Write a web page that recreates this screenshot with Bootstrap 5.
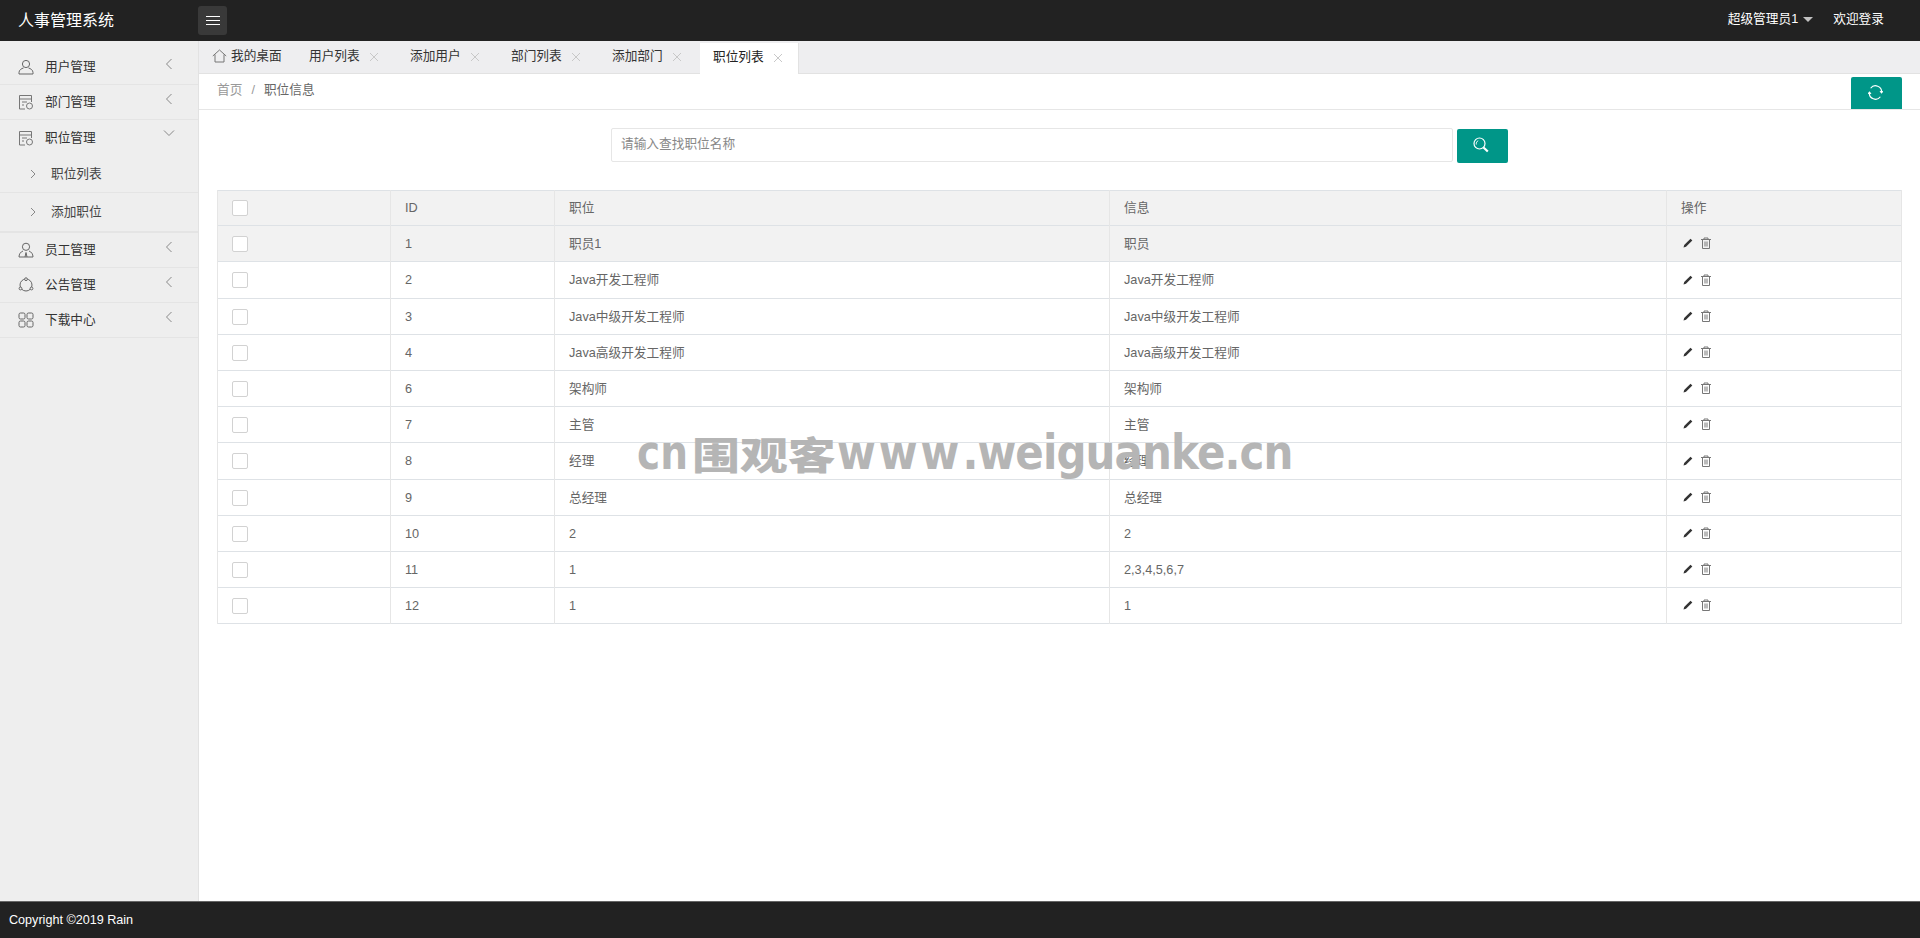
<!DOCTYPE html>
<html lang="zh-CN">
<head>
<meta charset="utf-8">
<title>人事管理系统</title>
<link href="https://cdn.jsdelivr.net/npm/bootstrap@5.3.0/dist/css/bootstrap.min.css" rel="stylesheet">
<style>
html,body{height:100%;overflow:hidden}
body{font-family:"Liberation Sans","Noto Sans CJK SC",sans-serif;font-size:12.7px;color:#666;background:#fff;line-height:20px}
.app-shell{height:938px;position:relative}
.top-bar{height:41px;background:#222;color:#fff;padding:0}
.brand-name{width:198px;padding-left:18px;font-size:16px;color:#fff}
.menu-toggle{width:29px;height:29px;background:#393939;border-radius:3px}
.top-link{color:#fff;font-size:12.7px;text-decoration:none}
.user-links{padding-bottom:3px}
.user-caret{width:0;height:0;border:5.500px solid transparent;border-top-color:#c2c2c2;border-bottom:0;margin-left:5px;margin-right:20px}
.side-panel{width:199px;background:#eee;border-right:1px solid #e2e2e2;padding-top:9px;flex:none}
.side-row{height:35px;border-bottom:1px solid #e4e4e4;padding-left:18px;color:#333;position:relative;padding-top:0}
.side-row svg.ico{width:16px;height:16px;margin-right:11px;flex:none}
.side-row .chev{position:absolute;left:165px;top:7px;width:8px;height:14px}
.side-row .chev-down{position:absolute;left:163px;top:9px;width:12px;height:8px}
.side-sub{height:38px;border-bottom:1px solid #e4e4e4;padding-left:30px;color:#444;padding-top:0}
.side-sub svg{width:6px;height:10px;margin-right:15px}
.side-sub-last{height:40px;border-bottom:2px solid #e4e4e4}
.tab-strip{height:33px;background:#eeeef0;border-bottom:1px solid #e2e2e2;padding-top:2px;flex:none}
.tab-cell{height:30px;width:101px;padding-left:13px;color:#333;flex:none;padding-bottom:4px}
.tab-home{width:97px;padding-left:13px}
.tab-on{background:#fff;height:31px;width:99px;color:#222;border-right:1px solid #e2e2e2}
.tab-x{width:10px;height:10px;margin-left:9px;margin-top:2px}
.crumb-bar{height:36px;border-bottom:1px solid #e6e6e6;padding-left:18px;padding-right:18px;flex:none}
.crumb-list{margin:0;padding-bottom:3px;--bs-breadcrumb-divider-color:#999;--bs-breadcrumb-item-padding-x:9px}
.crumb-list .breadcrumb-item{color:#999;line-height:20px}
.crumb-list .breadcrumb-item.active{color:#666}
.teal-btn{background:#009688;border:0;border-radius:2px;color:#fff;width:51px;padding:0;display:flex;align-items:center;justify-content:center}
.refresh-btn{height:32px;margin-top:3px;padding-right:3px;padding-bottom:2px;border-radius:2px 2px 0 0}
.find-row{width:897px;margin:18px auto 0;height:62px;gap:4px}
.find-input{height:34px;border:1px solid #e6e6e6;border-radius:2px;font-size:12.7px;padding:0 9px 2px;flex:1;color:#666}
.find-input::placeholder{color:#888}
.find-btn{height:34px;margin-top:1px;padding-right:3px;padding-bottom:2px}
.data-wrap{margin:0 18px}
.data-table{width:1684px;table-layout:fixed;margin:0;--bs-table-color:#666;--bs-table-bg:#fff;font-size:12.7px}
.data-table>thead>tr>th,.data-table>tbody>tr>td{padding:0 14px;vertical-align:middle;color:#666;font-weight:400;border-color:#e6e6e6;height:36px}
.data-table>thead>tr>th{height:35px;background:#f2f2f2}
.data-table>tbody>tr.row-on>td{background:#f2f2f2}
.data-table>tbody>tr.row-tall>td{height:37px}
.fake-check{display:block;width:16px;height:16px;background:#fff;border:1px solid #d2d2d2;border-radius:2px}
.act-set{padding-left:2px;padding-bottom:1px}
.act-pen{width:10px;height:10px;margin-right:7px}
.act-bin{width:12px;height:12px}
.foot-bar{height:37px;background:#222;border-top:1px solid #666;color:#fff;padding-left:9px;font-size:12.6px;flex:none}
.stamp-text{position:absolute;left:637px;top:434px;color:#b5b5b5;display:flex;align-items:flex-start;pointer-events:none;white-space:nowrap}
.stamp-cn,.stamp-url{display:block;font-family:"DejaVu Sans",sans-serif;font-weight:700;font-size:42px;line-height:42px;transform-origin:0 84.6%}
.stamp-cn{width:55px;transform:scale(.93,1.15)}
.stamp-url{width:460px;margin-left:2px;transform:scaleY(1.15);letter-spacing:-.9px}
.stamp-www{letter-spacing:3px}
.stamp-cjk{display:block;width:143px;font-family:"Noto Sans CJK SC",sans-serif;font-weight:900;font-size:38px;line-height:38px;transform-origin:0 50%;transform:scaleX(1.26)}
</style>
</head>
<body>
<div class="app-shell d-flex flex-column">
  <nav class="navbar top-bar flex-nowrap justify-content-start">
    <div class="brand-name">人事管理系统</div>
    <div class="menu-toggle d-flex align-items-center justify-content-center">
      <svg width="16" height="12" viewBox="0 0 16 12"><path d="M1 1.500h14M1 5.500h14M1 9.500h14" stroke="#fff" stroke-width="1"/></svg>
    </div>
    <div class="ms-auto d-flex align-items-center user-links">
      <a class="top-link" href="#">超级管理员1</a><span class="user-caret"></span>
      <a class="top-link" href="#" style="margin-right:36px">欢迎登录</a>
    </div>
  </nav>

  <div class="d-flex flex-grow-1" style="min-height:0">
    <aside class="side-panel">
      <div class="side-row d-flex align-items-center">
        <svg class="ico" viewBox="0 0 16 16" fill="none" stroke="#666"><circle cx="8" cy="5" r="3.600"/><path d="M1 15v-1.500c0-2.500 2.500-4 4.500-4.500M15 15v-1.500c0-2.500-2.500-4-4.500-4.500M1 15h14"/></svg>用户管理
        <svg class="chev" viewBox="0 0 8 14" fill="none" stroke="#888"><path d="M6.500 2 1.500 7l5 5"/></svg>
      </div>
      <div class="side-row d-flex align-items-center">
        <svg class="ico" viewBox="0 0 16 16" fill="none" stroke="#777"><path d="M7 15H1.500V1.500h12V8M1.500 5h12M4 8h5M4 11h2"/><circle cx="11.500" cy="12" r="3"/></svg>部门管理
        <svg class="chev" viewBox="0 0 8 14" fill="none" stroke="#888"><path d="M6.500 2 1.500 7l5 5"/></svg>
      </div>
      <div class="side-row d-flex align-items-center" style="border-bottom:0">
        <svg class="ico" viewBox="0 0 16 16" fill="none" stroke="#777"><path d="M7 15H1.500V1.500h12V8M1.500 5h12M4 8h5M4 11h2"/><circle cx="11.500" cy="12" r="3"/></svg>职位管理
        <svg class="chev-down" viewBox="0 0 12 8" fill="none" stroke="#888"><path d="M1 1.500l5 5 5-5"/></svg>
      </div>
      <div class="side-sub d-flex align-items-center">
        <svg viewBox="0 0 6 10" fill="none" stroke="#888"><path d="M1 1l4 4-4 4"/></svg>职位列表
      </div>
      <div class="side-sub side-sub-last d-flex align-items-center">
        <svg viewBox="0 0 6 10" fill="none" stroke="#888"><path d="M1 1l4 4-4 4"/></svg>添加职位
      </div>
      <div class="side-row d-flex align-items-center">
        <svg class="ico" viewBox="0 0 16 16" fill="none" stroke="#666"><circle cx="8" cy="4.800" r="3.600"/><path d="M5 9C2.500 10 1 12 1 15h14c0-3-1.500-5-4-6M8 10.500l-1 4.500M8 10.500l1 4.500"/></svg>员工管理
        <svg class="chev" viewBox="0 0 8 14" fill="none" stroke="#888"><path d="M6.500 2 1.500 7l5 5"/></svg>
      </div>
      <div class="side-row d-flex align-items-center">
        <svg class="ico" viewBox="0 0 16 16" fill="none" stroke="#666"><circle cx="8" cy="8" r="6"/><circle cx="8" cy="2.200" r="1.400" fill="#eee"/><circle cx="2.500" cy="11.500" r="1.400" fill="#eee"/><circle cx="13.500" cy="11.500" r="1.400" fill="#eee"/></svg>公告管理
        <svg class="chev" viewBox="0 0 8 14" fill="none" stroke="#888"><path d="M6.500 2 1.500 7l5 5"/></svg>
      </div>
      <div class="side-row d-flex align-items-center">
        <svg class="ico" viewBox="0 0 16 16" fill="none" stroke="#666"><rect x="1" y="1" width="6" height="6" rx="1.500"/><rect x="9" y="1" width="6" height="6" rx="1.500"/><rect x="1" y="9" width="6" height="6" rx="1.500"/><rect x="9" y="9" width="6" height="6" rx="1.500"/></svg>下载中心
        <svg class="chev" viewBox="0 0 8 14" fill="none" stroke="#888"><path d="M6.500 2 1.500 7l5 5"/></svg>
      </div>
    </aside>

    <main class="flex-grow-1 d-flex flex-column" style="min-width:0">
      <div class="tab-strip d-flex">
        <div class="tab-cell tab-home d-flex align-items-center">
          <svg width="15" height="14" viewBox="0 0 15 14" fill="none" stroke="#777" style="margin-right:4px"><path d="M.8 7 7.500 1l6.700 6M3 5.500V13h9V5.500"/></svg>我的桌面
        </div>
        <div class="tab-cell d-flex align-items-center">用户列表<svg class="tab-x" viewBox="0 0 10 10" stroke="#c8c8c8"><path d="M1 1l8 8M9 1l-8 8"/></svg></div>
        <div class="tab-cell d-flex align-items-center">添加用户<svg class="tab-x" viewBox="0 0 10 10" stroke="#c8c8c8"><path d="M1 1l8 8M9 1l-8 8"/></svg></div>
        <div class="tab-cell d-flex align-items-center">部门列表<svg class="tab-x" viewBox="0 0 10 10" stroke="#c8c8c8"><path d="M1 1l8 8M9 1l-8 8"/></svg></div>
        <div class="tab-cell d-flex align-items-center">添加部门<svg class="tab-x" viewBox="0 0 10 10" stroke="#c8c8c8"><path d="M1 1l8 8M9 1l-8 8"/></svg></div>
        <div class="tab-cell tab-on d-flex align-items-center">职位列表<svg class="tab-x" viewBox="0 0 10 10" stroke="#c8c8c8"><path d="M1 1l8 8M9 1l-8 8"/></svg></div>
      </div>

      <div class="crumb-bar d-flex justify-content-between">
        <ol class="breadcrumb crumb-list align-items-center">
          <li class="breadcrumb-item">首页</li>
          <li class="breadcrumb-item active">职位信息</li>
        </ol>
        <button class="teal-btn refresh-btn" type="button" aria-label="刷新">
          <svg width="15" height="15" viewBox="0 0 16 16" fill="none" stroke="#fff" stroke-width="1.200"><path d="M2.800 3.500A6.500 6.500 0 0 1 14.500 8M13.200 12.500A6.500 6.500 0 0 1 1.500 8"/><path d="M12.800 6.500 14.500 8.300 15.800 6.500M3.200 9.500 1.500 7.700.2 9.500"/></svg>
        </button>
      </div>

      <div class="find-row d-flex align-items-start">
        <input class="form-control find-input" type="text" placeholder="请输入查找职位名称">
        <button class="teal-btn find-btn" type="button" aria-label="搜索">
          <svg width="16" height="16" viewBox="0 0 16 16" fill="none" stroke="#fff"><circle cx="6.500" cy="6.500" r="5.500" stroke-width="1.200"/><path d="M3.300 7.500C3 5.800 3.800 4.300 5.200 3.700" stroke-width="1"/><path d="M10.500 10.500l4.300 4" stroke-width="2.200"/></svg>
        </button>
      </div>

      <div class="data-wrap">
        <table class="table table-bordered data-table">
          <colgroup><col style="width:173px"><col style="width:164px"><col style="width:555px"><col style="width:557px"><col style="width:235px"></colgroup>
          <thead><tr><th><span class="fake-check"></span></th><th>ID</th><th>职位</th><th>信息</th><th>操作</th></tr></thead>
          <tbody id="rows"></tbody>
        </table>
      </div>
    </main>
  </div>

  <footer class="foot-bar d-flex align-items-center">Copyright ©2019 Rain</footer>
  <div class="stamp-text"><span class="stamp-cn">cn</span><span class="stamp-cjk">围观客</span><span class="stamp-url"><span class="stamp-www">www</span>.weiguanke.cn</span></div>
</div>
<script>
const data=[[1,'职员1','职员'],[2,'Java开发工程师','Java开发工程师'],[3,'Java中级开发工程师','Java中级开发工程师'],[4,'Java高级开发工程师','Java高级开发工程师'],[6,'架构师','架构师'],[7,'主管','主管'],[8,'经理','经理'],[9,'总经理','总经理'],[10,'2','2'],[11,'1','2,3,4,5,6,7'],[12,'1','1']];
const icons='<svg class="act-pen" viewBox="0 0 10 10"><path d="M.5 9.500l.7-2.500L7.500.8l1.800 1.800L3 8.800z" fill="#333"/></svg><svg class="act-bin" viewBox="0 0 12 12" fill="none" stroke="#777"><path d="M1 2.500h10M4 2.500V1h4v1.500M2.500 2.500v9h7v-9M5 4.500v5M7 4.500v5"/></svg>';
document.getElementById('rows').innerHTML=data.map((r,i)=>`<tr class="${i==0?'row-on':''}${i==1||i==6?'row-tall':''}"><td><span class="fake-check"></span></td><td>${r[0]}</td><td>${r[1]}</td><td>${r[2]}</td><td><span class="d-flex align-items-center act-set">${icons}</span></td></tr>`).join('');
</script>
<script src="https://cdn.jsdelivr.net/npm/bootstrap@5.3.0/dist/js/bootstrap.bundle.min.js"></script>
</body>
</html>
